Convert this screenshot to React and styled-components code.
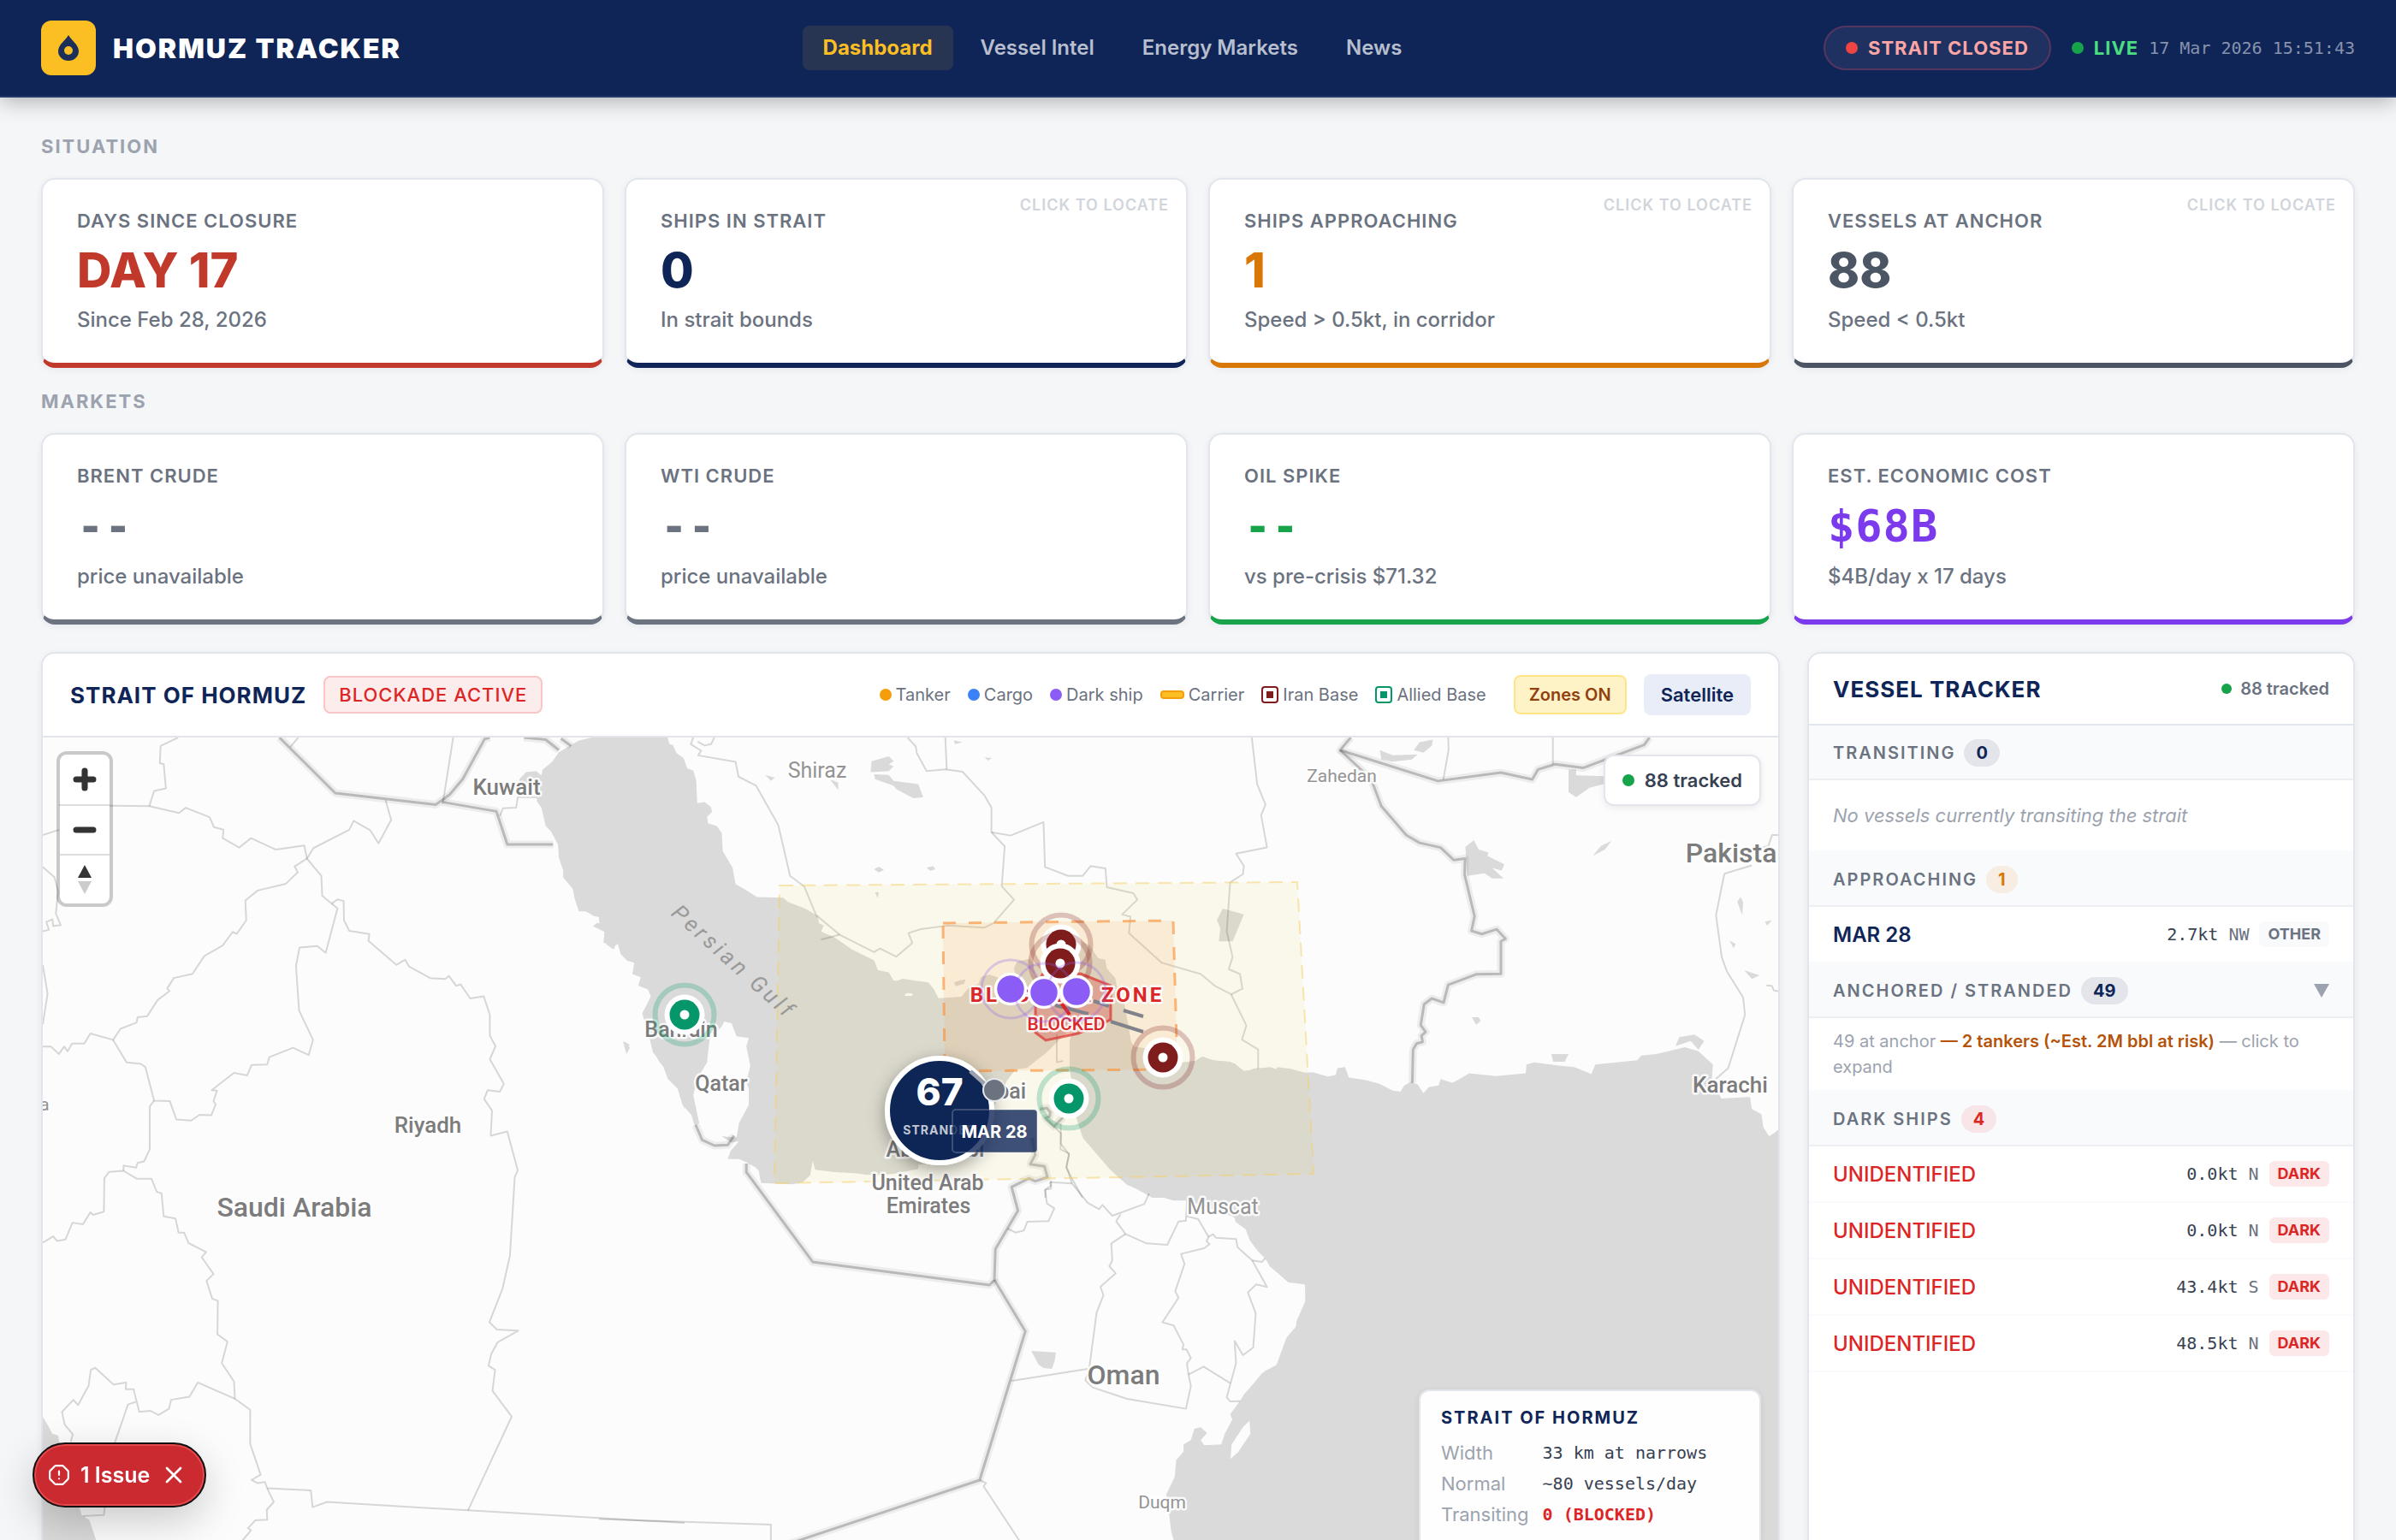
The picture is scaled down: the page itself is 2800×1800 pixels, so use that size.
import { useState } from "react";
import styled, { createGlobalStyle } from "styled-components";
import { Minus, OctagonAlert, Plus, X } from "lucide-react";

const situation = [
  { label: "Days since closure", value: "DAY 17", sub: "Since Feb 28, 2026", color: "#c0392b" },
  { label: "Ships in strait", value: "0", sub: "In strait bounds", color: "#0f2557", locate: true },
  { label: "Ships approaching", value: "1", sub: "Speed > 0.5kt, in corridor", color: "#d97706", locate: true },
  { label: "Vessels at anchor", value: "88", sub: "Speed < 0.5kt", color: "#4b5563", locate: true },
];

const markets = [
  { label: "Brent crude", value: "--", sub: "price unavailable", color: "#6b7280" },
  { label: "WTI crude", value: "--", sub: "price unavailable", color: "#6b7280" },
  { label: "Oil spike", value: "--", sub: "vs pre-crisis $71.32", color: "#16a34a" },
  { label: "Est. economic cost", value: "$68B", sub: "$4B/day x 17 days", color: "#7c3aed" },
];

const darkShips = [
  { id: 1, speed: "0.0kt", heading: "N" },
  { id: 2, speed: "0.0kt", heading: "N" },
  { id: 3, speed: "43.4kt", heading: "S" },
  { id: 4, speed: "48.5kt", heading: "N" },
];

// Every tile keeps its own units, the transform puts it on the map
const tiles = [
  {
    id: "west",
    transform: "translate(0 840) scale(0.5102 0.6124)",
    water: [
      "1355,36 1325,42 1305,52 1280,64 1265,82 1243,97 1240,108 1228,100 1205,102 1190,115 1188,130 1228,128 1230,158 1240,170 1250,205 1262,215 1278,240 1280,265 1290,290 1290,303 1312,325 1316,343 1326,368 1342,368 1360,377 1382,380 1388,390 1368,390 1358,396 1385,407 1382,428 1395,430 1400,438 1415,430 1422,450 1437,462 1455,466 1480,482 1490,494 1478,490 1480,510 1490,528 1508,530 1505,545 1500,570 1485,575 1490,610 1500,625 1500,640 1510,655 1525,670 1545,675 1552,690 1552,705 1568,745 1568,100 1550,75 1535,52 1528,36",
      "98,1332 112,1352 120,1365 133,1368 140,1400 170,1470 187,1520 205,1530 220,1568 230,1640 98,1640",
      "1427,617 1443,628 1435,640",
    ],
    lines: [
      "408,36 368,52 366,85 375,87 380,133 353,138 342,167",
      "98,222 135,212",
      "135,165 342,167 410,180 425,170 480,188 490,207 512,212 510,228 548,246 575,228 632,250 697,242 703,267",
      "703,267 718,247 800,212 810,195 848,213 867,238 896,193 883,155",
      "703,267 736,300 738,338 760,353 773,345 787,348 788,385 800,405 846,411 844,424 908,470 928,460 937,473 985,495 1020,497 1028,491 1045,510 1055,507 1077,534 1108,530 1122,565 1122,605 1135,625 1122,650 1154,697 1145,712 1117,709 1109,726 1127,748 1124,796 1162,788 1186,862 1179,875 1168,1025 1151,1088 1121,1152 1138,1166 1187,1168 1140,1190 1125,1213 1119,1235 1134,1243 1128,1283 1172,1332 1072,1511",
      "703,267 675,282 682,293 655,315 590,328 562,347 564,385 542,411 533,407 510,433 468,453 441,487 398,495 383,515 388,520 361,537 337,568 315,570 313,580 276,592 259,613 207,601 193,620 165,620 155,635 147,626 135,640 117,626 98,626",
      "760,353 773,362 746,447 727,434 686,437 678,472 685,557 717,613 707,642 671,628 617,646 612,660 576,661 566,681 536,676 485,709 497,710 489,730 494,736 484,757 457,756 438,767 404,765 389,730 353,729 333,665 323,659 290,656 259,613",
      "353,729 343,740 343,822 330,845 315,848 312,857 283,853 283,863",
      "98,1000 122,988 131,997 150,994 166,962 190,965 207,942 213,947 238,941 239,877 250,865 283,863 313,878 347,878 359,903 370,906 375,950 402,954 409,981 422,981 432,1001 472,1018 462,1028 489,1060 473,1073 486,1107 499,1111 498,1175 521,1189 508,1230 536,1265 538,1298 573,1319 573,1384 597,1443 576,1453 590,1459 607,1457 612,1469 627,1495 611,1510 612,1529 585,1530 568,1545 575,1549 556,1568 540,1640",
      "538,1298 453,1267 434,1294 392,1300 387,1317 363,1329 344,1321 319,1323 306,1280 288,1280 289,1267 260,1271 218,1239 208,1243 203,1273 179,1310 168,1300 142,1323 148,1347 167,1366 162,1380",
      "311,1304 293,1309 263,1382",
      "612,1469 712,1473 716,1505 749,1495 1072,1511 1568,1535",
      "98,283 125,303 133,330 128,372 139,394 122,396 120,383 106,388 112,403 98,406",
      "98,470 109,525 98,583",
      "1038,36 1015,158",
      "665,54 683,36",
      "1145,186 1152,171 1182,170 1186,150 1230,150",
      "190,1522 238,1520 240,1505",
    ],
    borders: [
      "640,36 768,142 998,164 1030,145 1060,115 1110,39 1122,36",
      "1012,159 1137,177 1162,240 1267,240",
      "1200,36 1250,40 1280,60",
      "1285,38 1308,52",
    ],
  },
  {
    id: "gulf",
    transform: "translate(700 840) scale(0.574 0.3827)",
    water: [
      "0,57 62,57 65,67 80,57 140,57 142,78 150,80 158,105 172,120 180,152 192,158 198,190 200,258 215,255 228,270 230,285 220,300 222,320 240,328 250,350 252,405 272,455 278,505 295,520 322,545 375,547 385,560 420,580 445,602 448,625 458,632 452,650 480,668 515,705 560,738 568,768 590,775 600,800 625,805 650,900 650,1375 600,1390 560,1395 520,1388 480,1385 440,1378 435,1350 430,1395 415,1415 395,1422 330,1418 325,1380 318,1370 300,1355 285,1345 262,1345 268,1320 285,1290 270,1295 250,1275 280,1280 285,1235 305,1180 305,1130 300,1110 308,1060 300,1000 305,975 280,970 270,930 255,925 250,940 225,980 220,1050 200,1100 192,1150 204,1235 195,1245 188,1210 170,1180 160,1130 140,1100 128,1050 110,1020 105,990 100,960 88,900 95,880 105,850 105,830 80,815 85,790 68,780 72,745 60,720 55,690 38,675 30,705 15,690 10,640 0,620",
      "555,130 590,115 600,130 590,140 600,145 590,160 553,163",
      "560,170 590,172 600,190 650,200 660,240 640,243 605,215 600,205 562,185",
      "338,172 358,180 350,190",
      "470,185 487,195 487,218",
      "722,66 740,72 725,78",
      "785,118 800,120 792,128",
      "560,460 570,452 580,462 570,470",
      "667,455 680,450 685,460 675,465",
      "1270,580 1313,598 1290,680 1262,680 1265,640 1258,615",
      "562,530 570,530 567,548",
      "50,985 62,995 56,1022",
    ],
    lines: [
      "192,57 187,78 208,98 202,112 278,132 284,177 320,205 365,325 389,480 418,513 442,600 490,660 560,713 572,702 605,727 638,685 630,655 655,643 710,632 785,638 803,625 845,553 820,512 826,390 799,347 799,272 785,235 740,162 705,155 667,160 647,105 645,85 628,57",
      "705,57 708,155",
      "201,70 215,82 228,78 235,57",
      "490,660 452,675",
      "799,347 838,357 905,316 908,453 955,480 985,480 1001,450 1031,457 1034,515 1088,533 1096,553 1065,598 1082,605 1079,655 1145,745 1225,780 1255,817 1287,842 1310,825 1305,780 1282,765 1290,728 1278,650 1285,500 1311,475 1313,450 1297,412 1360,393 1348,295 1357,262 1340,200 1329,57",
      "1287,842 1318,937 1309,980 1342,1010 1342,1070",
    ],
    borders: [],
  },
  {
    id: "strait",
    transform: "translate(1010 1050) scale(0.3333)",
    water: [
      "0,210 38,225 40,245 70,280 110,290 135,282 190,290 225,295 245,320 260,350 340,345 370,310 400,300 410,275 440,268 475,280 500,285 530,270 525,245 535,222 580,212 600,235 640,225 690,150 760,150 790,165 820,210 845,215 850,245 880,280 890,330 910,360 925,440 935,500 945,520 980,525 1040,560 1110,575 1160,570 1185,555 1225,568 1270,572 1300,580 1330,605 1375,600 1380,610 1430,612 1450,592 1495,598 1560,615 1560,1050 1010,1050 920,1000 850,930 800,850 760,790 745,740 720,600 720,500 735,455 700,480 640,540 570,595 530,600 500,640 420,800 400,860 340,900 220,930 150,940 80,950 0,970",
      "315,295 335,288 355,284 350,300 320,308",
    ],
    land: ["140,338 150,332 170,334 168,342 145,342"],
    lines: [
      "675,475 675,575 697,570",
      "665,800 690,825 688,880 718,895 708,945 765,1050",
      "635,1050 635,1022 655,1018 655,990",
    ],
    borders: ["615,740 640,735 652,750 650,765 635,770 665,800 697,768"],
  },
  {
    id: "oman",
    transform: "translate(700 1300) scale(0.574 0.3333)",
    water: [
      "968,0 985,90 1010,140 1040,200 1075,255 1120,285 1170,310 1195,310 1290,365 1300,380 1330,420 1355,500 1365,540 1405,598 1438,600 1438,670 1420,750 1400,790 1380,885 1350,915 1310,1000 1285,1060 1290,1080 1280,1110 1270,1165 1232,1168 1225,1150 1238,1125 1225,1105 1212,1110 1205,1150 1190,1165 1190,1190 1175,1220 1172,1280 1155,1340 1160,1400 1165,1470 1190,1620 1568,1620 1568,0",
      "880,837 930,842 928,870 922,900 905,897 895,885",
    ],
    land: ["1320,1085 1325,1130 1308,1150 1303,1195 1288,1217 1286,1180 1305,1150 1310,1110"],
    lines: [
      "775,1290 788,1300 783,1312 855,1500 900,1610",
      "840,942 995,900",
      "832,408 848,422 865,415 872,384 915,382 927,337 912,320 908,272 920,258 918,245",
      "0,1427 350,1446 350,1600",
      "918,245 963,250 995,318 1018,340 1025,325 1045,363 1110,322 1120,285",
      "963,250 952,190 957,148 940,110 940,40",
      "1062,358 1053,382 1072,427 1115,460 1157,465 1180,383 1195,380 1197,310",
      "1072,427 1043,460 1045,520 1039,540 1052,565 1021,612 1027,642 1013,703 998,900 990,940 1005,965 1075,1005 1195,1040 1205,960 1200,918 1197,880 1205,862 1196,832 1188,832 1190,815 1170,748 1147,737 1180,650 1173,628 1192,532 1185,497 1232,477 1243,463 1237,453 1241,437 1220,375 1197,365",
      "1241,437 1250,428 1256,440 1297,445 1300,473 1330,520 1350,525 1356,512",
      "1330,520 1360,613 1338,604 1321,632 1337,705 1332,825 1311,852 1294,802 1297,880 1278,1000 1285,1014 1305,1013",
      "1200,920 1231,892 1285,950",
    ],
    borders: [
      "300,180 300,210 435,525 795,606 805,588 807,480 853,345 840,262 875,232 888,242 913,228 907,190 878,182 888,150 882,90",
      "805,588 868,768 775,1290 410,1500 240,1600",
      "197,45 210,97 235,117 262,115 275,82",
    ],
  },
  {
    id: "east",
    transform: "translate(1400 840) scale(0.4464 0.6124)",
    water: [
      "0,650 15,645 25,652 85,655 125,675 145,668 190,665 235,678 300,675 340,683 360,680 365,667 385,665 395,685 440,690 475,697 510,710 530,712 540,700 558,693 575,698 590,715 605,703 630,700 635,688 665,695 680,690 710,677 780,682 858,677 860,660 880,656 945,662 985,665 1030,678 1040,660 1150,652 1160,643 1200,640 1275,627 1310,635 1348,660 1345,690 1370,725 1445,722 1450,745 1475,755 1480,780 1495,797 1510,790 1530,778 1530,1640 0,1640 0,1387 60,1387 70,1365 92,1335 85,1328 110,1305 120,1290 175,1245 205,1235 230,1185 256,1165 258,1150 282,1110 280,1080 235,1075 190,1045 175,1030 155,1015 135,995 125,975 98,960 95,948 0,925",
      "476,60 510,70 575,68 560,78 510,82 480,78",
      "565,60 580,45 615,40 612,52 590,65",
      "970,97 990,97 990,108 1070,110 1062,125 1025,132 990,150 970,140",
      "700,245 722,232 735,250 760,255 758,262 802,278 795,290 770,285 800,305 770,305 750,295 705,300",
      "1033,262 1055,243 1083,233 1065,250",
      "717,570 735,570 740,577 728,584",
      "1412,350 1420,340 1427,350 1425,375",
      "1430,480 1470,490 1450,497",
      "1392,424 1408,430 1402,438",
      "1484,388 1502,384 1490,395",
      "1250,625 1260,608 1300,603 1325,615 1310,632 1290,615",
      "925,640 970,640 960,655 930,655",
    ],
    land: ["135,1340 137,1365 105,1400 85,1413 88,1385 118,1352"],
    lines: [
      "655,36 656,60 642,117",
      "929,36 929,87",
      "1530,222 1503,222 1493,243 1455,250",
      "1450,280 1378,296 1356,375 1371,455 1385,483 1427,532 1432,565 1388,667 1355,688",
      "1488,509 1502,510 1508,519 1530,521",
    ],
    borders: [
      "400,36 372,60 628,119 793,103 875,116 890,97 935,87 1008,94 1168,50 1182,36",
      "372,60 453,115 480,167 545,222 580,237 635,246 670,270 699,267 698,298 724,377 716,405 743,411 782,402 805,420 793,425 793,487 728,488 655,508 643,542 612,534 592,545 583,585 596,598 585,605 588,617 572,620 563,632 561,695",
    ],
  },
];

const places = [
  { name: "Kuwait", x: 592, y: 929, size: 26 },
  { name: "Riyadh", x: 500, y: 1324, size: 26 },
  { name: "Saudi Arabia", x: 344, y: 1422, size: 32, strong: true },
  { name: "Shiraz", x: 955, y: 909, size: 25, faint: true },
  { name: "Zahedan", x: 1568, y: 914, size: 21, faint: true },
  { name: "Pakistan", x: 2032, y: 1008, size: 32, strong: true },
  { name: "Karachi", x: 2022, y: 1277, size: 26 },
  { name: "Bahrain", x: 796, y: 1212, size: 25 },
  { name: "Qatar", x: 843, y: 1275, size: 25 },
  { name: "Abu Dhabi", x: 1093, y: 1352, size: 25 },
  { name: "Dubai", x: 1167, y: 1284, size: 25 },
  { name: "United Arab", x: 1084, y: 1391, size: 25 },
  { name: "Emirates", x: 1085, y: 1418, size: 25 },
  { name: "Muscat", x: 1429, y: 1419, size: 25, faint: true },
  { name: "Oman", x: 1313, y: 1618, size: 32, strong: true },
  { name: "Duqm", x: 1358, y: 1763, size: 21, faint: true },
  { name: "a", x: 52, y: 1298, size: 21, faint: true },
];

const bases = [
  { x: 1240, y: 1104, color: "#7f1d1d" },
  { x: 1239, y: 1126, color: "#7f1d1d" },
  { x: 1359, y: 1236, color: "#7f1d1d" },
  { x: 1249, y: 1284, color: "#059669" },
  { x: 800, y: 1186, color: "#059669" },
];

const darkMarkers = [
  { x: 1181, y: 1156 },
  { x: 1220, y: 1160 },
  { x: 1258, y: 1159 },
];

const StatCards = ({ stats, mono }) => (
  <CardGrid>
    {stats.map((stat) => (
      <Card
        key={stat.label}
        as={stat.locate ? "button" : "div"}
        $color={stat.color}
      >
        {stat.locate && <LocateHint>Click to locate</LocateHint>}
        <CardLabel>{stat.label}</CardLabel>
        <CardValue $color={stat.color} $mono={mono}>
          {stat.value}
        </CardValue>
        <CardSub>{stat.sub}</CardSub>
      </Card>
    ))}
  </CardGrid>
);

const GulfMap = ({ showZones }) => (
  <MapSvg viewBox="50 862 2028 968" preserveAspectRatio="xMidYMin slice">
    <defs>
      <filter id="shadow" x="-50%" y="-50%" width="200%" height="200%">
        <feDropShadow dx="0" dy="6" stdDeviation="10" floodOpacity="0.35" />
      </filter>
    </defs>
    {tiles.map((tile) => (
      <g key={tile.id} transform={tile.transform}>
        {tile.water.map((points) => (
          <polygon key={points} className="water" points={points} />
        ))}
        {tile.land?.map((points) => (
          <polygon key={points} className="land" points={points} />
        ))}
      </g>
    ))}
    {tiles.map((tile) => (
      <g key={tile.id} transform={tile.transform}>
        {tile.lines.map((points) => (
          <polyline key={points} className="region" points={points} />
        ))}
        {tile.borders.map((points) => (
          <polyline key={points} className="halo" points={points} />
        ))}
        {tile.borders.map((points) => (
          <polyline key={points} className="border" points={points} />
        ))}
      </g>
    ))}

    {showZones && (
      <g>
        <polygon
          points="911,1035 1516,1031 1535,1372 905,1383"
          fill="#eed75a"
          fillOpacity="0.1"
          stroke="#f6cf63"
          strokeOpacity="0.5"
          strokeWidth="2"
          strokeDasharray="16 10"
        />
        <polygon
          points="1102,1079 1371,1076 1376,1250 1104,1252"
          fill="#fb923c"
          fillOpacity="0.13"
          stroke="#fb923c"
          strokeOpacity="0.65"
          strokeWidth="3"
          strokeDasharray="15 15"
        />
        <polygon
          points="1218,1139 1263,1138 1298,1152 1298,1192 1260,1208 1222,1216 1210,1207 1210,1160"
          fill="#dc2626"
          fillOpacity="0.26"
          stroke="#dc2626"
          strokeOpacity="0.65"
          strokeWidth="3"
        />
      </g>
    )}
    <g stroke="#80838b" strokeWidth="4">
      <path d="M1233 1175L1272 1185M1278 1170L1296 1176M1298 1194L1336 1206M1313 1181L1336 1188" />
      <path d="M1240 1172L1250 1186" stroke="#dc2626" />
    </g>

    {places.map((place) => (
      <PlaceName
        key={place.name}
        x={place.x}
        y={place.y}
        fontSize={place.size}
        $faint={place.faint}
      >
        {place.name}
      </PlaceName>
    ))}
    <SeaName transform="translate(783 1069) rotate(42)">Persian Gulf</SeaName>
    <ZoneName x="1247" y="1171">BLOCKADE ZONE</ZoneName>
    <ZoneStatus x="1246" y="1204">BLOCKED</ZoneStatus>

    {bases.map((base) => (
      <g key={`${base.x}-${base.y}`} transform={`translate(${base.x} ${base.y})`}>
        <circle r="34.5" fill="none" stroke={base.color} strokeWidth="6" opacity="0.25" />
        <circle r="23.5" fill="#fff" />
        <circle r="17.5" fill={base.color} />
        <circle r="5.5" fill="#fff" />
      </g>
    ))}

    <g transform="translate(1098 1298)">
      <circle r="61" fill="#0f2557" stroke="#fff" strokeWidth="6" filter="url(#shadow)" />
      <ClusterCount y="-6">67</ClusterCount>
      <ClusterLabel y="28">STRANDED</ClusterLabel>
    </g>

    {darkMarkers.map((ship) => (
      <g key={ship.x} transform={`translate(${ship.x} ${ship.y})`}>
        <circle r="34" fill="none" stroke="#8b5cf6" strokeWidth="3" opacity="0.28" />
        <circle r="17.5" fill="#8b5cf6" stroke="#fff" strokeWidth="3.5" />
      </g>
    ))}

    <path d="M1134 1252L1152 1268" stroke="#9aa1ad" strokeWidth="5" />
    <circle cx="1162" cy="1274" r="13" fill="#6b7280" stroke="#e5e7eb" strokeWidth="2" />
    <rect
      x="1113"
      y="1297"
      width="99"
      height="50"
      rx="4"
      fill="#0f2557"
      fillOpacity="0.8"
      stroke="#fff"
      strokeOpacity="0.2"
      strokeWidth="2"
    />
    <ShipLabel x="1162" y="1330">MAR 28</ShipLabel>
  </MapSvg>
);

const VesselRow = ({ name, speed, heading, type }) => (
  <Row>
    <VesselName $dark={type === "Dark"}>{name}</VesselName>
    <Speed>{speed}</Speed>
    <Heading>{heading}</Heading>
    <TypeChip $dark={type === "Dark"}>{type}</TypeChip>
  </Row>
);

const App = () => {
  const [showZones, setShowZones] = useState(true);
  const [showIssue, setShowIssue] = useState(true);

  return (
    <>
      <GlobalStyle />
      <Header>
        <Brand>
          <Logo>
            <svg width="24" height="30" viewBox="0 0 24 30">
              <path d="M12 0C8 7 0 11 0 19a12 11 0 0 0 24 0C24 11 16 7 12 0Z" fill="#1c2f58" />
              <circle cx="12" cy="18" r="5" fill="#fbbf24" />
            </svg>
          </Logo>
          <BrandName>HORMUZ TRACKER</BrandName>
        </Brand>
        <Nav>
          <NavLink href="#dashboard" $active>Dashboard</NavLink>
          <NavLink href="#vessels">Vessel Intel</NavLink>
          <NavLink href="#markets">Energy Markets</NavLink>
          <NavLink href="#news">News</NavLink>
        </Nav>
        <HeaderStatus>
          <ClosedPill>
            <Dot $size={14} $color="#ef4444" />
            STRAIT CLOSED
          </ClosedPill>
          <Live>
            <Dot $size={14} $color="#16a34a" />
            <strong>LIVE</strong>
            <time>17 Mar 2026 15:51:43</time>
          </Live>
        </HeaderStatus>
      </Header>

      <Main>
        <SectionTitle>Situation</SectionTitle>
        <StatCards stats={situation} />
        <SectionTitle>Markets</SectionTitle>
        <StatCards stats={markets} mono />

        <Columns>
          <Panel>
            <MapHeader>
              <PanelTitle>STRAIT OF HORMUZ</PanelTitle>
              <BlockadeBadge>BLOCKADE ACTIVE</BlockadeBadge>
              <Legend>
                <li><Dot $size={14} $color="#f59e0b" />Tanker</li>
                <li><Dot $size={14} $color="#3b82f6" />Cargo</li>
                <li><Dot $size={14} $color="#8b5cf6" />Dark ship</li>
                <li><CarrierKey />Carrier</li>
                <li><BaseKey $color="#7f1d1d" />Iran Base</li>
                <li><BaseKey $color="#059669" />Allied Base</li>
              </Legend>
              <ZonesButton onClick={() => setShowZones(!showZones)}>
                Zones {showZones ? "ON" : "OFF"}
              </ZonesButton>
              <SatelliteButton>Satellite</SatelliteButton>
            </MapHeader>
            <MapArea>
              <GulfMap showZones={showZones} />
              <ZoomControl>
                <button aria-label="Zoom in">
                  <Plus size={34} strokeWidth={5} />
                </button>
                <button aria-label="Zoom out">
                  <Minus size={34} strokeWidth={5} />
                </button>
                <button aria-label="Reset bearing">
                  <svg width="16" height="34" viewBox="0 0 16 34">
                    <path d="M8 0L16 15H0Z" fill="#333" />
                    <path d="M8 34L0 19H16Z" fill="#ccc" />
                  </svg>
                </button>
              </ZoomControl>
              <TrackedBadge>
                <Dot $size={14} $color="#16a34a" />
                88 tracked
              </TrackedBadge>
              <InfoBox>
                <h3>STRAIT OF HORMUZ</h3>
                <dl>
                  <dt>Width</dt>
                  <dd>33 km at narrows</dd>
                  <dt>Normal</dt>
                  <dd>~80 vessels/day</dd>
                  <dt>Transiting</dt>
                  <dd className="alert">0 (BLOCKED)</dd>
                </dl>
              </InfoBox>
            </MapArea>
          </Panel>

          <Panel>
            <TrackerHeader>
              <PanelTitle>VESSEL TRACKER</PanelTitle>
              <TrackedCount>
                <Dot $size={12} $color="#16a34a" />
                88 tracked
              </TrackedCount>
            </TrackerHeader>
            <GroupHeader>
              TRANSITING <Count>0</Count>
            </GroupHeader>
            <Empty>No vessels currently transiting the strait</Empty>
            <GroupHeader>
              APPROACHING <Count $color="#d97706" $bg="#f7ede3">1</Count>
            </GroupHeader>
            <List>
              <VesselRow name="MAR 28" speed="2.7kt" heading="NW" type="Other" />
            </List>
            <GroupHeader as="button">
              ANCHORED / STRANDED <Count>49</Count>
              <Caret width="18" height="16" viewBox="0 0 18 16">
                <path d="M0 0H18L9 16Z" fill="#9ca3af" />
              </Caret>
            </GroupHeader>
            <Summary>
              49 at anchor <strong>— 2 tankers (~Est. 2M bbl at risk)</strong> —
              click to expand
            </Summary>
            <GroupHeader>
              DARK SHIPS <Count $color="#dc2626" $bg="#f8e5e7">4</Count>
            </GroupHeader>
            <List>
              {darkShips.map((ship) => (
                <VesselRow
                  key={ship.id}
                  name="UNIDENTIFIED"
                  speed={ship.speed}
                  heading={ship.heading}
                  type="Dark"
                />
              ))}
            </List>
          </Panel>
        </Columns>
      </Main>

      {showIssue && (
        <IssuePill>
          <OctagonAlert size={26} />
          <span>1 Issue</span>
          <button aria-label="Dismiss" onClick={() => setShowIssue(false)}>
            <X size={32} strokeWidth={2} />
          </button>
        </IssuePill>
      )}
    </>
  );
};

export default App;

const mono = `"DejaVu Sans Mono", "Liberation Mono", monospace`;

const GlobalStyle = createGlobalStyle`
  * {
    box-sizing: border-box;
  }

  html {
    scrollbar-width: none;
  }

  body {
    margin: 0;
    background: #f4f6f8;
    color: #0f2557;
    font-family: Inter, "Liberation Sans", sans-serif;
    font-size: 22px;
  }

  h1, h2, h3, dl, dd, ul, p {
    margin: 0;
    padding: 0;
  }

  button {
    font-family: inherit;
    cursor: pointer;
  }
`;

const Header = styled.header`
  position: relative;
  display: flex;
  align-items: center;
  justify-content: space-between;
  height: 114px;
  padding: 0 48px;
  background: #0f2557;
  border-bottom: 2px solid #24386a;
  box-shadow: 0 4px 24px rgba(0, 0, 0, 0.3);
`;

const Brand = styled.div`
  display: flex;
  align-items: center;
  gap: 20px;
`;

const Logo = styled.div`
  display: flex;
  align-items: center;
  justify-content: center;
  width: 64px;
  height: 64px;
  border-radius: 12px;
  background: #fbbf24;
`;

const BrandName = styled.h1`
  color: white;
  font-size: 32px;
  font-weight: 900;
  letter-spacing: 2px;
`;

const Nav = styled.nav`
  display: flex;
  gap: 8px;
`;

const NavLink = styled.a`
  padding: 0 24px;
  border-radius: 8px;
  background: ${(props) => (props.$active ? "#283552" : "transparent")};
  color: ${(props) => (props.$active ? "#fbbf24" : "#b7bece")};
  font-size: 24px;
  font-weight: ${(props) => (props.$active ? 700 : 600)};
  line-height: 52px;
  text-decoration: none;
`;

const HeaderStatus = styled.div`
  display: flex;
  align-items: center;
  gap: 24px;
`;

const Dot = styled.span`
  flex: none;
  width: ${(props) => props.$size}px;
  height: ${(props) => props.$size}px;
  border-radius: 50%;
  background: ${(props) => props.$color};
`;

const ClosedPill = styled.div`
  display: flex;
  align-items: center;
  gap: 12px;
  height: 52px;
  padding: 0 24px;
  border: 2px solid #54365f;
  border-radius: 26px;
  background: #1f3160;
  color: #fca5a5;
  font-weight: 700;
  letter-spacing: 1px;
`;

const Live = styled.div`
  display: flex;
  align-items: center;
  gap: 12px;

  strong {
    color: #4ade80;
    font-weight: 700;
    letter-spacing: 1px;
  }

  time {
    color: #8792ab;
    font-family: ${mono};
    font-size: 20px;
  }
`;

const Main = styled.main`
  padding: 40px 48px;
`;

const SectionTitle = styled.h2`
  margin-bottom: 20px;
  color: #9ca3af;
  font-size: 22px;
  font-weight: 700;
  line-height: 34px;
  letter-spacing: 2px;
  text-transform: uppercase;
`;

const CardGrid = styled.div`
  display: grid;
  grid-template-columns: repeat(4, 1fr);
  gap: 24px;
  margin-bottom: 22px;
`;

const Card = styled.div`
  position: relative;
  padding: 32px 40px;
  border: 2px solid #e2e5ec;
  border-bottom: 6px solid ${(props) => props.$color};
  border-radius: 16px;
  background: white;
  box-shadow: 0 2px 8px rgba(15, 37, 87, 0.06);
  text-align: left;
`;

const LocateHint = styled.span`
  position: absolute;
  top: 18px;
  right: 20px;
  color: #d1d5db;
  font-size: 18px;
  font-weight: 600;
  line-height: 24px;
  letter-spacing: 1px;
  text-transform: uppercase;
`;

const CardLabel = styled.div`
  color: #6b7280;
  font-size: 22px;
  font-weight: 600;
  line-height: 32px;
  letter-spacing: 1px;
  text-transform: uppercase;
`;

const CardValue = styled.div`
  margin: 12px 0 10px;
  color: ${(props) => props.$color};
  font-family: ${(props) => (props.$mono ? mono : "inherit")};
  font-size: ${(props) => (props.$mono ? 52 : 56)}px;
  font-weight: 800;
  line-height: ${(props) => (props.$mono ? 62 : 60)}px;
  letter-spacing: ${(props) => (props.$mono ? 1 : 0)}px;
`;

const CardSub = styled.div`
  color: #6b7280;
  font-size: 24px;
  font-weight: 500;
  line-height: 36px;
`;

const Columns = styled.div`
  display: grid;
  grid-template-columns: minmax(0, 1fr) 640px;
  gap: 32px;
  margin-top: 32px;
`;

const Panel = styled.section`
  border: 2px solid #e2e5ec;
  border-radius: 16px;
  background: white;
  box-shadow: 0 2px 8px rgba(15, 37, 87, 0.06);
  overflow: hidden;
`;

const MapHeader = styled.div`
  display: flex;
  align-items: center;
  padding: 24px 32px;
  border-bottom: 2px solid #e2e5ec;
`;

const PanelTitle = styled.h2`
  font-size: 26px;
  font-weight: 700;
  letter-spacing: 1px;
`;

const BlockadeBadge = styled.span`
  margin: 0 auto 0 20px;
  padding: 0 16px;
  border: 2px solid #f8c6c6;
  border-radius: 8px;
  background: #fdecec;
  color: #dc2626;
  font-weight: 500;
  line-height: 40px;
  letter-spacing: 1px;
`;

const Legend = styled.ul`
  display: flex;
  gap: 20px;
  margin-right: 32px;
  color: #6b7280;
  font-size: 20px;
  list-style: none;

  > li {
    display: flex;
    align-items: center;
    gap: 5px;
  }
`;

const CarrierKey = styled.span`
  width: 28px;
  height: 10px;
  border: 2px solid #f59e0b;
  border-radius: 4px;
  background: #fbbf24;
`;

const BaseKey = styled.span`
  width: 20px;
  height: 20px;
  padding: 4px;
  border: 2px solid ${(props) => props.$color};
  border-radius: 4px;
  background: ${(props) => props.$color} content-box;
`;

const ZonesButton = styled.button`
  padding: 0 16px;
  border: 2px solid #fde68a;
  border-radius: 8px;
  background: #fef3c7;
  color: #92400e;
  font-size: 20px;
  font-weight: 600;
  line-height: 42px;
`;

const SatelliteButton = styled.button`
  margin-left: 20px;
  padding: 0 20px;
  border: none;
  border-radius: 8px;
  background: #e8edf8;
  color: #0f2557;
  font-size: 22px;
  font-weight: 600;
  line-height: 48px;
`;

const MapArea = styled.div`
  position: relative;
  height: 968px;
  background: #fcfcfc;
`;

const MapSvg = styled.svg`
  display: block;
  width: 100%;
  height: 100%;

  polyline {
    fill: none;
    stroke-linejoin: round;
    vector-effect: non-scaling-stroke;
  }

  .water {
    fill: #dadada;
  }

  .land {
    fill: #fcfcfc;
  }

  .region {
    stroke: rgba(0, 0, 0, 0.15);
    stroke-width: 2px;
  }

  .halo {
    stroke: rgba(0, 0, 0, 0.06);
    stroke-width: 9px;
  }

  .border {
    stroke: rgba(0, 0, 0, 0.22);
    stroke-width: 3px;
  }
`;

const MapText = styled.text`
  font-family: Roboto, "Open Sans", sans-serif;
  paint-order: stroke;
  stroke: rgba(255, 255, 255, 0.85);
  stroke-width: 5px;
  stroke-linejoin: round;
  text-anchor: middle;
`;

const PlaceName = styled(MapText)`
  fill: ${(props) => (props.$faint ? "#949494" : "#7c7c7c")};
  font-weight: ${(props) => (props.$faint ? 400 : 500)};
`;

const SeaName = styled(MapText)`
  fill: #999;
  stroke: none;
  font-size: 26px;
  font-style: italic;
  letter-spacing: 4px;
  text-anchor: start;
`;

const ZoneName = styled(MapText)`
  fill: #dc2626;
  font-size: 24px;
  font-weight: 700;
  letter-spacing: 3px;
`;

const ZoneStatus = styled(MapText)`
  fill: #dc2626;
  font-size: 21px;
  font-weight: 500;
`;

const ClusterCount = styled.text`
  fill: white;
  font-size: 44px;
  font-weight: 800;
  text-anchor: middle;
`;

const ClusterLabel = styled.text`
  fill: rgba(255, 255, 255, 0.75);
  font-size: 14px;
  font-weight: 700;
  letter-spacing: 1px;
  text-anchor: middle;
`;

const ShipLabel = styled.text`
  fill: white;
  font-size: 20px;
  font-weight: 700;
  text-anchor: middle;
`;

const ZoomControl = styled.div`
  position: absolute;
  top: 16px;
  left: 16px;
  display: flex;
  flex-direction: column;
  border: 4px solid rgba(0, 0, 0, 0.2);
  border-radius: 12px;
  background: white;
  background-clip: padding-box;

  > button {
    display: flex;
    align-items: center;
    justify-content: center;
    width: 58px;
    height: 58px;
    padding: 0;
    border: none;
    background: none;
    color: #333;
  }

  > button + button {
    border-top: 2px solid #ddd;
  }
`;

const TrackedBadge = styled.div`
  position: absolute;
  top: 20px;
  right: 20px;
  display: flex;
  align-items: center;
  gap: 12px;
  padding: 0 20px;
  border: 2px solid #e2e5ec;
  border-radius: 12px;
  background: white;
  color: #374151;
  font-weight: 600;
  line-height: 56px;
  box-shadow: 0 2px 8px rgba(0, 0, 0, 0.08);
`;

const InfoBox = styled.div`
  position: absolute;
  right: 20px;
  bottom: 20px;
  width: 400px;
  padding: 16px 24px 20px;
  border: 2px solid #e2e5ec;
  border-radius: 12px;
  background: rgba(255, 255, 255, 0.96);
  box-shadow: 0 2px 8px rgba(0, 0, 0, 0.08);

  h3 {
    margin-bottom: 8px;
    font-size: 20px;
    font-weight: 700;
    line-height: 30px;
    letter-spacing: 2px;
  }

  dl {
    display: grid;
    grid-template-columns: auto 1fr;
    column-gap: 16px;
    line-height: 36px;
  }

  dt {
    color: #9ca3af;
  }

  dd {
    color: #374151;
    font-family: ${mono};
    font-size: 20px;
  }

  .alert {
    color: #dc2626;
    font-weight: 700;
  }
`;

const TrackerHeader = styled.div`
  display: flex;
  align-items: center;
  justify-content: space-between;
  height: 84px;
  padding: 0 28px;
  border-bottom: 2px solid #e2e5ec;
`;

const TrackedCount = styled.div`
  display: flex;
  align-items: center;
  gap: 10px;
  color: #6b7280;
  font-size: 20px;
  font-weight: 600;
`;

const GroupHeader = styled.div`
  display: flex;
  align-items: center;
  width: 100%;
  height: 64px;
  padding: 2px 28px 0;
  border: none;
  border-bottom: 2px solid #eceef1;
  background: #f8fafc;
  color: #6b7280;
  font-size: 20px;
  font-weight: 600;
  letter-spacing: 2px;
`;

const Count = styled.span`
  margin-left: 10px;
  padding: 0 14px;
  border-radius: 16px;
  background: ${(props) => props.$bg || "#e3e5eb"};
  color: ${(props) => props.$color || "#0f2557"};
  font-weight: 700;
  line-height: 32px;
  letter-spacing: 0;
`;

const Caret = styled.svg`
  margin-left: auto;
`;

const Empty = styled.p`
  padding: 24px 28px;
  border-bottom: 2px solid #f8fafc;
  color: #9ca3af;
  font-style: italic;
  line-height: 34px;
`;

const Summary = styled.p`
  padding: 12px 28px;
  border-bottom: 2px solid #f8fafc;
  color: #9ca3af;
  font-size: 20px;
  line-height: 30px;

  strong {
    color: #b45309;
    font-weight: 600;
  }
`;

const List = styled.ul`
  list-style: none;
`;

const Row = styled.li`
  display: flex;
  align-items: center;
  gap: 12px;
  height: 66px;
  padding: 0 28px;
  border-bottom: 2px solid #f8fafc;
`;

const VesselName = styled.span`
  margin-right: auto;
  color: ${(props) => (props.$dark ? "#dc2626" : "#0f2557")};
  font-size: 24px;
  font-weight: ${(props) => (props.$dark ? 500 : 600)};
`;

const Speed = styled.span`
  color: #374151;
  font-family: ${mono};
  font-size: 20px;
`;

const Heading = styled(Speed)`
  color: #6b7280;
`;

const TypeChip = styled.span`
  padding: 0 10px;
  border-radius: 6px;
  background: ${(props) => (props.$dark ? "#fce8e8" : "#f8fafc")};
  color: ${(props) => (props.$dark ? "#dc2626" : "#6b7280")};
  font-size: 18px;
  font-weight: 700;
  line-height: 30px;
  text-transform: uppercase;
`;

const IssuePill = styled.div`
  position: fixed;
  bottom: 38px;
  left: 38px;
  display: flex;
  align-items: center;
  gap: 12px;
  height: 76px;
  padding: 0 20px 0 16px;
  border: 2px solid #111;
  border-radius: 38px;
  background: #ca2a30;
  box-shadow: inset 0 0 0 2px #e5484d, 0 16px 48px rgba(0, 0, 0, 0.2);
  color: white;
  font-size: 25px;
  font-weight: 600;

  > button {
    display: flex;
    padding: 0;
    border: none;
    background: none;
    color: inherit;
  }
`;
